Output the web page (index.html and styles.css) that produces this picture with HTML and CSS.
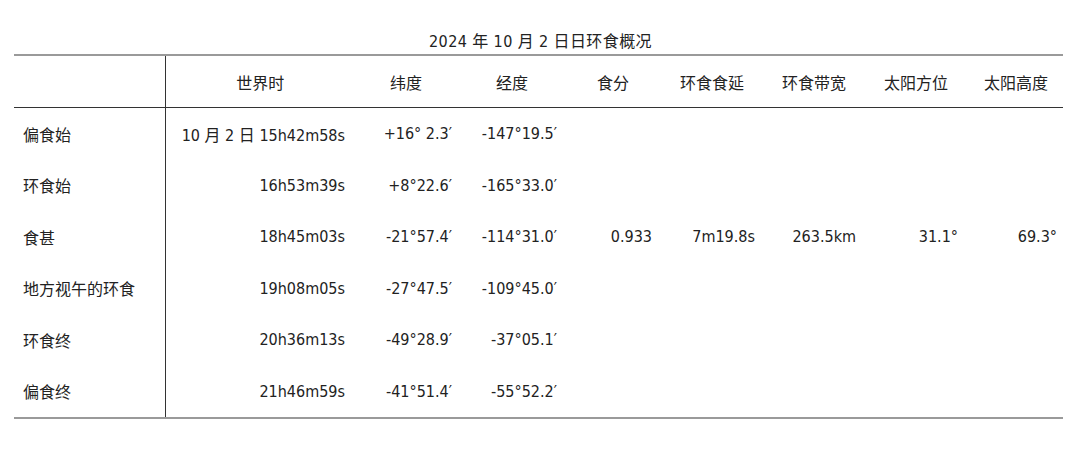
FILE: index.html
```html
<!DOCTYPE html>
<html lang="zh">
<head>
<meta charset="utf-8">
<link rel="stylesheet" href="styles.css">
</head>
<body>
<div class="wrap">
  <div class="title">2024 年 10 月 2 日日环食概况</div>
  <table class="eclipse">
    <colgroup>
      <col class="w1"><col class="w2"><col class="w3"><col class="w4"><col class="w5"><col class="w6"><col class="w7"><col class="w8"><col class="w9">
    </colgroup>
    <thead>
      <tr>
        <th class="lab"></th>
        <th>世界时</th>
        <th>纬度</th>
        <th>经度</th>
        <th>食分</th>
        <th>环食食延</th>
        <th>环食带宽</th>
        <th>太阳方位</th>
        <th>太阳高度</th>
      </tr>
    </thead>
    <tbody>
      <tr>
        <td class="lab">偏食始</td>
        <td class="c2">10 月 2 日 15h42m58s</td>
        <td class="c3">+16° 2.3′</td>
        <td class="c4">-147°19.5′</td>
        <td class="c5"></td><td class="c6"></td><td class="c7"></td><td class="c8"></td><td class="c9"></td>
      </tr>
      <tr>
        <td class="lab">环食始</td>
        <td class="c2">16h53m39s</td>
        <td class="c3">+8°22.6′</td>
        <td class="c4">-165°33.0′</td>
        <td class="c5"></td><td class="c6"></td><td class="c7"></td><td class="c8"></td><td class="c9"></td>
      </tr>
      <tr>
        <td class="lab">食甚</td>
        <td class="c2">18h45m03s</td>
        <td class="c3">-21°57.4′</td>
        <td class="c4">-114°31.0′</td>
        <td class="c5">0.933</td>
        <td class="c6">7m19.8s</td>
        <td class="c7">263.5km</td>
        <td class="c8">31.1°</td>
        <td class="c9">69.3°</td>
      </tr>
      <tr>
        <td class="lab">地方视午的环食</td>
        <td class="c2">19h08m05s</td>
        <td class="c3">-27°47.5′</td>
        <td class="c4">-109°45.0′</td>
        <td class="c5"></td><td class="c6"></td><td class="c7"></td><td class="c8"></td><td class="c9"></td>
      </tr>
      <tr>
        <td class="lab">环食终</td>
        <td class="c2">20h36m13s</td>
        <td class="c3">-49°28.9′</td>
        <td class="c4">-37°05.1′</td>
        <td class="c5"></td><td class="c6"></td><td class="c7"></td><td class="c8"></td><td class="c9"></td>
      </tr>
      <tr>
        <td class="lab">偏食终</td>
        <td class="c2">21h46m59s</td>
        <td class="c3">-41°51.4′</td>
        <td class="c4">-55°52.2′</td>
        <td class="c5"></td><td class="c6"></td><td class="c7"></td><td class="c8"></td><td class="c9"></td>
      </tr>
    </tbody>
  </table>
</div>
</body>
</html>
```
FILE: styles.css
```css
html, body {
  margin: 0;
  padding: 0;
  background: #ffffff;
}
body {
  font-family: "DejaVu Sans Condensed", "Noto Sans CJK SC", sans-serif;
  font-size: 16px;
  color: #222222;
}
.wrap {
  width: 1049px;
  padding: 30px 0 0 14px;
}
.title {
  height: 24px;
  line-height: 24px;
  text-align: center;
  letter-spacing: 0.4px;
  padding-left: 4px;
}
.eclipse {
  width: 1049px;
  table-layout: fixed;
  border-collapse: collapse;
  border-top: 2px solid #9a9a9a;
  border-bottom: 2px solid #9a9a9a;
}
.w1 { width: 151px; }
.w2 { width: 190px; }
.w3 { width: 102px; }
.w4 { width: 110px; }
.w5 { width: 92px; }
.w6 { width: 106px; }
.w7 { width: 98px; }
.w8 { width: 106px; }
.w9 { width: 94px; }

.eclipse th {
  height: 51px;
  padding: 0;
  font-weight: normal;
  text-align: center;
  border-bottom: 1px solid #333333;
  white-space: nowrap;
}
.eclipse td {
  height: 51.5px;
  padding: 0;
  text-align: right;
  white-space: nowrap;
}
.eclipse .lab {
  text-align: left;
  padding-left: 9px;
  border-right: 1px solid #333333;
}
.c2 { padding-right: 10px !important; }
.c3 { padding-right: 5px !important; }
.c4 { padding-right: 10px !important; }
.c5 { padding-right: 7px !important; }
.c6 { padding-right: 10px !important; }
.c7 { padding-right: 7px !important; }
.c8 { padding-right: 11px !important; }
.c9 { padding-right: 6px !important; }
```
